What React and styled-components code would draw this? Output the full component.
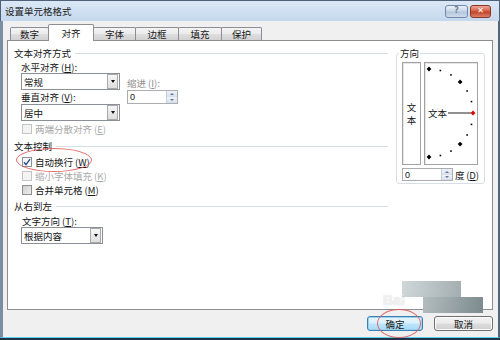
import React from "react";
import styled, { createGlobalStyle } from "styled-components";

const GlobalStyle = createGlobalStyle`
  html, body { margin: 0; padding: 0; }
  body {
    width: 500px; height: 340px; overflow: hidden;
    font-family: "Noto Sans CJK SC", "Noto Sans", sans-serif;
    font-size: 9.5px; line-height: 14px; color: #151515; background: #fff;
  }
  * { box-sizing: border-box; }
`;

const Window = styled.div`
  position: relative;
  width: 500px; height: 340px;
  display: flex; flex-direction: column;
  background: #1d3446;
  padding-bottom: 2px;
  overflow: hidden;
`;

const TitleBar = styled.div`
  height: 21px; flex: none;
  display: flex; align-items: center;
  padding: 0 8px 0 4px;
  background: linear-gradient(#dbe8f6, #c6d8ee);
  border: 1px solid #50627a; border-bottom: none;
`;

const TitleText = styled.div`
  flex: 1;
  color: #1a1a1a;
`;

const CaptionBtn = styled.div`
  height: 13px;
  width: ${p => p.$w}px;
  margin-left: ${p => p.$ml || 0}px;
  border: 1px solid ${p => (p.$close ? "#8d3423" : "#7189a8")};
  border-radius: 3px;
  display: flex; align-items: center; justify-content: center;
  font-family: "DejaVu Sans", sans-serif;
  font-weight: bold;
  font-size: 8px; line-height: 1;
  color: ${p => (p.$close ? "#fff" : "#6c7f99")};
  background: ${p =>
    p.$close
      ? "linear-gradient(#eaa696, #d45d45 48%, #c1401f 52%, #d9826f)"
      : "linear-gradient(#edf2f9, #c6d4e6 48%, #b3c5dc 52%, #cddbec)"};
`;

const Body = styled.div`
  flex: 1;
  display: flex; flex-direction: column;
  background: #f0f0f0;
  border-left: 3px solid #7b8da2;
  border-right: 2px solid #52657a;
  border-bottom: 1px solid #5fcff0;
  padding: 3px 5px 0 4px;
`;

const TabRow = styled.div`
  height: 16px; flex: none;
  display: flex; align-items: flex-end;
  padding-left: 3px;
`;

const Tab = styled.div`
  position: relative;
  width: ${p => p.$w}px;
  height: ${p => (p.$active ? 17 : 13)}px;
  margin-right: -1px;
  margin-bottom: ${p => (p.$active ? -1 : 0)}px;
  z-index: ${p => (p.$active ? 2 : 1)};
  border: 1px solid #8c8e94;
  border-bottom: none;
  border-radius: 2px 2px 0 0;
  background: ${p =>
    p.$active
      ? "#fff"
      : "linear-gradient(#f4f4f4, #ebebeb 48%, #dedede 52%, #d2d2d2)"};
  display: flex; align-items: center; justify-content: center;
  line-height: 12px;
  color: #1a1a1a;
`;

const Panel = styled.div`
  height: 270px; flex: none;
  background: #fff;
  border: 1px solid #8c8e94;
  padding: 5px 7px 0 6px;
  display: grid;
  grid-template-columns: 374px 89px;
  column-gap: 8px;
  align-items: start;
`;

const LeftCol = styled.div`
  display: flex; flex-direction: column;
`;

const GroupHeader = styled.div`
  height: ${p => p.$h}px;
  display: flex; align-items: center; gap: 4px;
  &::after {
    content: "";
    flex: 1;
    height: 1px;
    background: #d5dfe5;
  }
`;

const AlignGrid = styled.div`
  display: grid;
  grid-template-columns: 99px 51px;
  grid-template-rows: 13px 17px 14px 17px;
  column-gap: 7px;
  padding-left: 7px;
`;

const Label = styled.div`
  display: flex; align-items: center;
  color: ${p => (p.$disabled ? "#8e8e8e" : "#151515")};
  align-self: ${p => p.$self || "stretch"};
  height: ${p => (p.$h ? `${p.$h}px` : "auto")};
  padding-left: ${p => p.$pl || 0}px;
  white-space: nowrap;
`;

const Key = styled.span`
  margin-left: 2px;
  & u { text-decoration: underline; text-underline-offset: 1px; }
`;

const Combo = styled.div`
  width: ${p => p.$w}px;
  height: 17px;
  margin-left: ${p => p.$ml || 0}px;
  border: 1px solid #8a8f98;
  background: #fff;
  display: flex; align-items: stretch;
`;

const ComboValue = styled.div`
  flex: 1;
  padding-left: 2px;
  display: flex; align-items: center;
`;

const ComboBtn = styled.div`
  width: 11px;
  margin: 0 1px 0 0;
  border: 1px solid #a9a9a9;
  background: linear-gradient(#f6f6f6, #dedede);
  display: flex; align-items: center; justify-content: center;
  &::before {
    content: "";
    border-left: 2.5px solid transparent;
    border-right: 2.5px solid transparent;
    border-top: 3px solid #111;
  }
`;

const Spin = styled.div`
  width: 51px; flex: none;
  height: ${p => p.$h || 14}px;
  border: 1px solid #abadb3;
  background: #fff;
  display: flex; align-items: stretch;
`;

const SpinValue = styled.div`
  flex: 1;
  padding-left: 2px;
  display: flex; align-items: center;
  font-family: "Liberation Sans", sans-serif;
  font-size: 9px;
`;

const SpinBtns = styled.div`
  width: 11px;
  display: flex; flex-direction: column;
  border-left: 1px solid #c7d0da;
`;

const SpinHalf = styled.div`
  flex: 1;
  background: linear-gradient(#f0f4f8, #d6dfea);
  display: flex; align-items: center; justify-content: center;
  &::before {
    content: "";
    border-left: 2.5px solid transparent;
    border-right: 2.5px solid transparent;
    ${p => (p.$up ? "border-bottom: 2.5px solid #62789a;" : "border-top: 2.5px solid #62789a;")}
  }
`;

const CheckRow = styled.div`
  height: ${p => p.$h}px;
  padding-left: 8px;
  display: flex; align-items: center; gap: 3px;
  color: ${p => (p.$disabled ? "#a9a9a9" : "#151515")};
  white-space: nowrap;
`;

const Box = styled.div`
  width: 10px; height: 10px; flex: none;
  border: 1px solid ${p => (p.$disabled ? "#c4c4c4" : "#8f8f8f")};
  background: ${p =>
    p.$disabled
      ? "#f3f3f3"
      : p.$checked
      ? "linear-gradient(135deg, #f2f2f2, #ffffff)"
      : "linear-gradient(135deg, #cfcfcf, #eeeeee)"};
  display: flex; align-items: center; justify-content: center;
`;

const Fieldset = styled.fieldset`
  margin: 0;
  min-width: 0;
  border: 1px solid #d5dfe5;
  border-radius: 3px;
  padding: 2px 6px 2px 5px;
`;

const Legend = styled.legend`
  padding: 0 1px;
  margin-left: -3px;
  line-height: 14px;
`;

const OrientRow = styled.div`
  display: flex; gap: 3px;
  height: 103px;
`;

const OrientBox = styled.div`
  position: relative;
  width: ${p => p.$w}px;
  border: 1px solid #a2a2a2;
  box-shadow: inset 1px 1px 0 #e6e6e6;
  background: #fff;
  display: flex; flex-direction: column; align-items: center; justify-content: center;
  line-height: 13px;
`;

const DialSvg = styled.svg`
  position: absolute; left: 0; top: 0;
`;

const DialText = styled.div`
  position: absolute;
  left: 3px; top: 43px;
  line-height: 14px;
`;

const DegreeRow = styled.div`
  margin-top: 3px;
  height: 13px;
  display: flex; align-items: center; gap: 2px;
  white-space: nowrap;
`;

const DegreeLabel = styled.span`
  flex: none;
  white-space: nowrap;
  letter-spacing: -0.2px;
`;

const Footer = styled.div`
  display: flex; justify-content: flex-end; gap: 11px;
  margin-top: 6px;
`;

const Button = styled.div`
  width: ${p => p.$w}px;
  height: 15px;
  border: 1px solid ${p => (p.$default ? "#3c7fb1" : "#707070")};
  border-radius: 3px;
  background: ${p =>
    p.$default
      ? "linear-gradient(#eaf6fd, #d9f0fc 48%, #bee6fd 52%, #a7d9f5)"
      : "linear-gradient(#f2f2f2, #ebebeb 48%, #dddddd 52%, #cfcfcf)"};
  box-shadow: inset 0 0 0 1px ${p => (p.$default ? "#9ad2f4" : "#fcfcfc")};
  display: flex; align-items: center; justify-content: center;
  line-height: 12px;
`;

const Ellipse = styled.div`
  position: absolute;
  left: ${p => p.$x}px; top: ${p => p.$y}px;
  width: ${p => p.$w}px; height: ${p => p.$h}px;
  border: 1px solid rgba(226, 86, 86, 0.85);
  border-radius: 50%;
  pointer-events: none;
  z-index: 5;
`;

const Watermark = styled.div`
  position: absolute;
  left: ${p => p.$x}px; top: ${p => p.$y}px;
  width: ${p => p.$w}px; height: ${p => p.$h}px;
  background: ${p => p.$bg};
  z-index: 4;
`;

const WatermarkText = styled.div`
  position: absolute;
  left: 383px; top: 292px;
  font-family: "Liberation Sans", sans-serif;
  font-weight: bold;
  font-size: 14px;
  line-height: 16px;
  color: rgba(255, 255, 255, 0.75);
  text-shadow: 0 0 1px rgba(90, 90, 90, 0.35);
  z-index: 4;
`;

const Mn = ({ k }) => (
  <Key>
    (<u>{k}</u>)
  </Key>
);

const Check = ({ checked, disabled, children, h }) => (
  <CheckRow $h={h} $disabled={disabled}>
    <Box $checked={checked} $disabled={disabled}>
      {checked && (
        <svg width="8" height="8" viewBox="0 0 8 8">
          <path d="M1 4.2 L3 6.6 L7 1.2" fill="none" stroke="#2b4a8e" strokeWidth="1.4" />
        </svg>
      )}
    </Box>
    {children}
  </CheckRow>
);

const Dial = () => {
  const marks = [];
  for (let a = -90; a <= 90; a += 15) {
    const r = (a * Math.PI) / 180;
    const x = 4 + 44 * Math.cos(r);
    const y = 50 - 44 * Math.sin(r);
    if (a === 0) {
      marks.push(
        <polygon key={a} points={`${x},${y - 2.4} ${x + 2.4},${y} ${x},${y + 2.4} ${x - 2.4},${y}`} fill="#e00000" />
      );
    } else if (Math.abs(a) === 90 || Math.abs(a) === 45) {
      marks.push(
        <polygon key={a} points={`${x},${y - 2.4} ${x + 2.4},${y} ${x},${y + 2.4} ${x - 2.4},${y}`} fill="#000" />
      );
    } else {
      marks.push(<rect key={a} x={x - 0.8} y={y - 0.8} width="1.6" height="1.6" fill="#000" />);
    }
  }
  return (
    <DialSvg width="52" height="101" viewBox="0 0 52 101">
      <line x1="23" y1="50" x2="46" y2="50" stroke="#222" strokeWidth="1" />
      {marks}
    </DialSvg>
  );
};

const tabs = [
  { t: "数字", w: 39 },
  { t: "对齐", w: 46, active: true },
  { t: "字体", w: 43 },
  { t: "边框", w: 44 },
  { t: "填充", w: 44 },
  { t: "保护", w: 41 },
];

export default function App() {
  return (
    <>
      <GlobalStyle />
      <Window>
        <TitleBar>
          <TitleText>设置单元格格式</TitleText>
          <CaptionBtn $w={23}>?</CaptionBtn>
          <CaptionBtn $w={21} $ml={2} $close>✕</CaptionBtn>
        </TitleBar>
        <Body>
          <TabRow>
            {tabs.map(t => (
              <Tab key={t.t} $w={t.w} $active={t.active}>
                {t.t}
              </Tab>
            ))}
          </TabRow>
          <Panel>
            <LeftCol>
              <GroupHeader $h={14}>文本对齐方式</GroupHeader>
              <AlignGrid>
                <Label>
                  水平对齐<Mn k="H" />:
                </Label>
                <div />
                <Combo $w={99}>
                  <ComboValue>常规</ComboValue>
                  <ComboBtn />
                </Combo>
                <Label $disabled $self="end" $h={14}>
                  缩进<Mn k="I" />:
                </Label>
                <Label>
                  垂直对齐<Mn k="V" />:
                </Label>
                <Spin>
                  <SpinValue>0</SpinValue>
                  <SpinBtns>
                    <SpinHalf $up />
                    <SpinHalf />
                  </SpinBtns>
                </Spin>
                <Combo $w={99}>
                  <ComboValue>居中</ComboValue>
                  <ComboBtn />
                </Combo>
                <div />
              </AlignGrid>
              <Check h={16} disabled>
                <span>
                  两端分散对齐<Mn k="E" />
                </span>
              </Check>
              <GroupHeader $h={18}>文本控制</GroupHeader>
              <Check h={14} checked>
                <span>
                  自动换行<Mn k="W" />
                </span>
              </Check>
              <Check h={13} disabled>
                <span>
                  缩小字体填充<Mn k="K" />
                </span>
              </Check>
              <Check h={16}>
                <span>
                  合并单元格<Mn k="M" />
                </span>
              </Check>
              <GroupHeader $h={16}>从右到左</GroupHeader>
              <Label $h={13} $pl={8}>
                文字方向<Mn k="T" />:
              </Label>
              <Combo $w={82} $ml={7}>
                <ComboValue>根据内容</ComboValue>
                <ComboBtn />
              </Combo>
            </LeftCol>
            <Fieldset>
              <Legend>方向</Legend>
              <OrientRow>
                <OrientBox $w={19}>
                  <span>文</span>
                  <span>本</span>
                </OrientBox>
                <OrientBox $w={54}>
                  <Dial />
                  <DialText>文本</DialText>
                </OrientBox>
              </OrientRow>
              <DegreeRow>
                <Spin $h={13}>
                  <SpinValue>0</SpinValue>
                  <SpinBtns>
                    <SpinHalf $up />
                    <SpinHalf />
                  </SpinBtns>
                </Spin>
                <DegreeLabel>
                  度<Mn k="D" />
                </DegreeLabel>
              </DegreeRow>
            </Fieldset>
          </Panel>
          <Footer>
            <Button $w={56} $default>确定</Button>
            <Button $w={59}>取消</Button>
          </Footer>
        </Body>
        <Watermark $x={402} $y={281} $w={59} $h={16} $bg="linear-gradient(100deg, #cfd7d9, #a3aeb0)" />
        <Watermark $x={423} $y={297} $w={60} $h={16} $bg="linear-gradient(100deg, #b3bdbf, #7c8a8d)" />
        <WatermarkText>Bai</WatermarkText>
        <Ellipse $x={16} $y={148} $w={76} $h={24} />
        <Ellipse $x={377} $y={309} $w={44} $h={29} />
      </Window>
    </>
  );
}
